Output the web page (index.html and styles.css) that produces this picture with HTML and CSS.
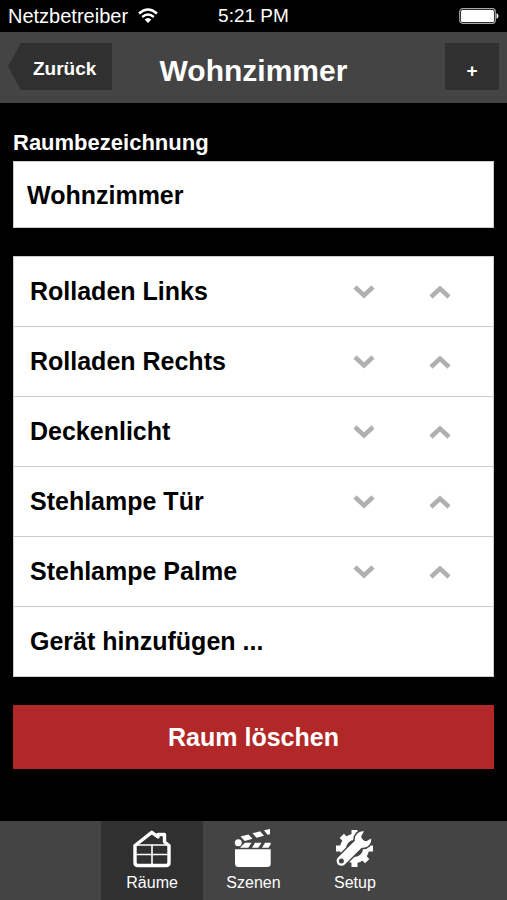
FILE: index.html
```html
<!DOCTYPE html>
<html lang="de">
<head>
  <meta charset="UTF-8">
  <meta name="viewport" content="width=device-width, initial-scale=1">
  <title>Wohnzimmer</title>
  <link rel="stylesheet" href="styles.css">
</head>
<body>
  <!-- chevrons shared by all rows -->
  <svg class="symbols" aria-hidden="true">
    <symbol id="down" viewBox="0 0 22 14"><path d="M2 2l9 8.500l9-8.500" fill="none" stroke="currentColor" stroke-width="4.500"/></symbol>
    <symbol id="up" viewBox="0 0 22 14"><path d="M2 12l9-8.500l9 8.500" fill="none" stroke="currentColor" stroke-width="4.500"/></symbol>
  </svg>

  <div class="status">
    <div class="carrier">
      <span>Netzbetreiber</span>
      <svg width="20" height="16" viewBox="0 0 20 16" fill="none" stroke="#fff" stroke-width="2.400">
        <path d="M1 5.500Q10-2.500 19 5.500"/>
        <path d="M4.200 9Q10 3.800 15.800 9"/>
        <path d="M10 15L6.600 11.400Q10 8.400 13.400 11.400Z" fill="#fff" stroke="none"/>
      </svg>
    </div>
    <span class="time">5:21 PM</span>
    <svg class="battery" width="40" height="16" viewBox="0 0 40 16">
      <rect x="0.700" y="0.700" width="35.600" height="14.600" rx="3" fill="none" stroke="#aaa" stroke-width="1.200"/>
      <rect x="2" y="2" width="33" height="12" rx="1.500" fill="#fff"/>
      <path d="M37.500 5.200Q39.500 6 39.500 8T37.500 10.800Z" fill="#fff"/>
    </svg>
  </div>

  <header class="header">
    <a class="back" href="#">Zurück</a>
    <h1>Wohnzimmer</h1>
    <button class="add" type="button">+</button>
  </header>

  <main class="content">
    <label for="roomName">Raumbezeichnung</label>
    <input class="room-name" id="roomName" type="text" value="Wohnzimmer">

    <ul class="devices">
      <li>
        <span class="name">Rolladen Links</span>
        <button type="button" aria-label="Nach unten"><svg width="22" height="14"><use href="#down"/></svg></button>
        <button type="button" aria-label="Nach oben"><svg width="22" height="14"><use href="#up"/></svg></button>
      </li>
      <li>
        <span class="name">Rolladen Rechts</span>
        <button type="button" aria-label="Nach unten"><svg width="22" height="14"><use href="#down"/></svg></button>
        <button type="button" aria-label="Nach oben"><svg width="22" height="14"><use href="#up"/></svg></button>
      </li>
      <li>
        <span class="name">Deckenlicht</span>
        <button type="button" aria-label="Nach unten"><svg width="22" height="14"><use href="#down"/></svg></button>
        <button type="button" aria-label="Nach oben"><svg width="22" height="14"><use href="#up"/></svg></button>
      </li>
      <li>
        <span class="name">Stehlampe Tür</span>
        <button type="button" aria-label="Nach unten"><svg width="22" height="14"><use href="#down"/></svg></button>
        <button type="button" aria-label="Nach oben"><svg width="22" height="14"><use href="#up"/></svg></button>
      </li>
      <li>
        <span class="name">Stehlampe Palme</span>
        <button type="button" aria-label="Nach unten"><svg width="22" height="14"><use href="#down"/></svg></button>
        <button type="button" aria-label="Nach oben"><svg width="22" height="14"><use href="#up"/></svg></button>
      </li>
      <li>
        <a class="name" href="#">Gerät hinzufügen ...</a>
      </li>
    </ul>

    <button class="delete" type="button">Raum löschen</button>
  </main>

  <nav class="tabs">
    <a class="tab active" href="#">
      <svg width="40" height="40" viewBox="0 0 40 40" fill="none" stroke="#fff" stroke-linejoin="round">
        <path d="M3 16.500L19.800 3.300L26 8V5.500H32.500V13L37 16.500V33.500Q37 36.500 34 36.500H6Q3 36.500 3 33.500Z" stroke-width="3.400"/>
        <path d="M3 16H37M3 25.500H37M20 16V36" stroke-width="1.600"/>
      </svg>
      <span>Räume</span>
    </a>
    <a class="tab" href="#">
      <svg width="40" height="40" viewBox="0 0 40 40" fill="#fff">
        <path d="M2 20.300H37.700V34.500Q37.700 38 34.200 38H5.500Q2 38 2 34.500Z"/>
        <circle cx="5.300" cy="13.800" r="3.500"/>
        <path d="M7.500 7.500L15.500 5.400L19.500 9.800L11.800 11.900ZM19.500 4.300L27 2.300L31 6.800L23.500 8.800ZM31 1.300L37 0V5.200L34.500 5.800Z"/>
        <path d="M7 18.700L12 13.800H18.500L15.300 18.700ZM19 18.700L22 13.800H28.500L25.300 18.700ZM29 18.700L32 13.800H37.700V15.200L35.500 18.700Z"/>
      </svg>
      <span>Szenen</span>
    </a>
    <a class="tab" href="#">
      <svg width="40" height="40" viewBox="0 0 40 40" fill="none" stroke="#fff">
        <circle cx="19.500" cy="19.500" r="11.500" stroke-width="6"/>
        <g stroke-width="6">
          <path d="M19.500 1V8M19.500 31V38M1 19.500H8M31 19.500H38"/>
          <path d="M6.800 6.800L11.200 11.200M27.700 27.700L32.200 32.200"/>
        </g>
        <!-- gap between gear and wrench -->
        <g stroke="#444">
          <path d="M6.400 32L26 12.500" stroke-width="12.500" stroke-linecap="round"/>
          <circle cx="28" cy="10.500" r="9.800" fill="#444" stroke="none"/>
        </g>
        <path d="M6.400 32L24.500 14" stroke-width="9.600" stroke-linecap="round"/>
        <path d="M36.200 9.500A8.300 8.300 0 1 1 29 2.300L26.200 7.300L27.300 11.200L31.200 12.300Z" fill="#fff" stroke="none"/>
        <circle cx="6.400" cy="32" r="2.500" fill="#444" stroke="none"/>
      </svg>
      <span>Setup</span>
    </a>
  </nav>
</body>
</html>
```

FILE: styles.css
```css
* {
  box-sizing: border-box;
}

body {
  margin: 0;
  min-height: 100vh;
  display: flex;
  flex-direction: column;
  background: #000;
  color: #fff;
  font-family: "Liberation Sans", Arial, sans-serif;
}

a {
  color: inherit;
  text-decoration: none;
}

button {
  font: inherit;
  color: inherit;
  border: none;
  padding: 0;
  cursor: pointer;
}

.symbols {
  display: none;
}

.status {
  display: grid;
  grid-template-columns: 1fr auto 1fr;
  align-items: center;
  height: 32px;
  padding: 0 8px;
  font-size: 20px;
}

.carrier {
  display: flex;
  align-items: center;
  gap: 10px;
}

.time {
  font-size: 19px;
}

.battery {
  justify-self: end;
}

.header {
  display: grid;
  grid-template-columns: 1fr auto 1fr;
  align-items: center;
  padding: 11px 8px 13px;
  background: #444;
}

.header h1 {
  margin: 0;
  padding-top: 8px;
  font-size: 30px;
  line-height: 32px;
}

.back,
.add {
  height: 47px;
  background: #303030;
  font-size: 19px;
  font-weight: bold;
  line-height: 47px;
}

.back {
  justify-self: start;
  padding: 2px 16px 0 25px;
  clip-path: polygon(13px 0, 100% 0, 100% 100%, 13px 100%, 0 50%);
}

.add {
  justify-self: end;
  width: 54px;
  padding-top: 4px;
}

.content {
  flex: 1;
  display: flex;
  flex-direction: column;
  padding: 28px 13px;
  font-size: 25px;
  font-weight: bold;
}

.content label {
  margin-bottom: 6px;
  font-size: 22px;
  line-height: 24px;
}

.room-name {
  width: 100%;
  height: 67px;
  margin-bottom: 28px;
  padding: 2px 13px 0;
  border: 1px solid #ccc;
  border-radius: 0;
  background: #fff;
  color: #000;
  font: inherit;
}

.devices {
  margin: 0 0 28px;
  padding: 0;
  list-style: none;
  border: 1px solid #ccc;
  background: #fff;
  color: #000;
}

.devices li {
  display: flex;
  height: 70px;
  padding: 0 15px 0 16px;
  border-bottom: 1px solid #ccc;
}

.devices li:last-child {
  height: 69px;
  border-bottom: none;
}

.name {
  flex: 1;
  align-self: center;
}

.devices button {
  display: flex;
  align-items: center;
  justify-content: center;
  width: 76px;
  background: none;
  color: #b0b0b0;
}

.delete {
  height: 64px;
  background: #b22828;
}

.tabs {
  display: flex;
  justify-content: center;
  background: #444;
}

.tab {
  display: flex;
  flex-direction: column;
  align-items: center;
  gap: 4px;
  width: 20%;
  padding: 8px 0 7px;
  font-size: 16px;
  line-height: 20px;
}

.tab.active {
  background: #303030;
}
```
